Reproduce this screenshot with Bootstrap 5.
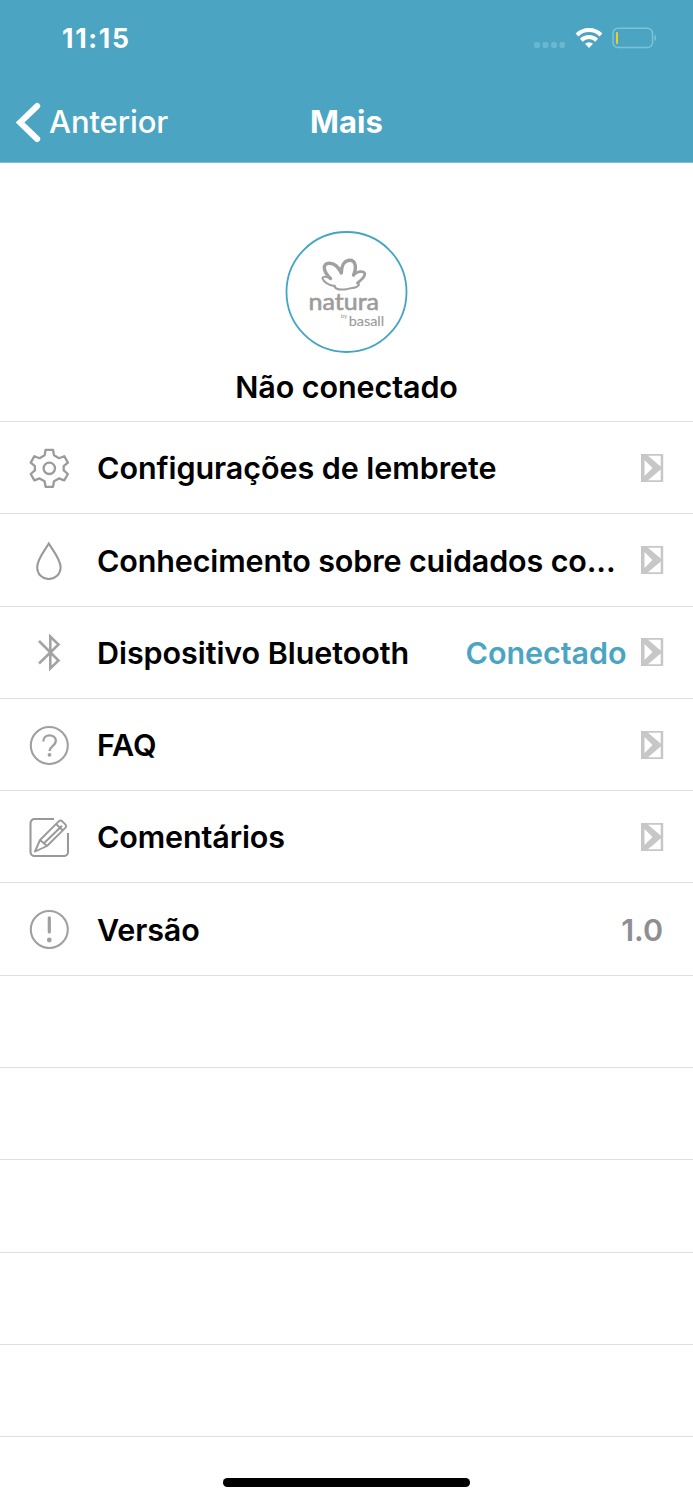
<!DOCTYPE html>
<html lang="pt-BR">
<head>
<meta charset="utf-8">
<meta name="viewport" content="width=device-width, initial-scale=1">
<title>Mais</title>
<link href="https://cdn.jsdelivr.net/npm/bootstrap@5.3.0/dist/css/bootstrap.min.css" rel="stylesheet">
<style>
  body { font-family: Inter, "Liberation Sans", sans-serif; color: #000; background: #fff; }
  .screen { height: 1500px; overflow: hidden; }
  .topbar { background: #4ba5c2; height: 163px; color: #fff; border-bottom: 1px solid #7fc0d4; }
  .status { height: 76px; padding: 0 36px 0 62px; }
  .clock { font-size: 26.500px; font-weight: 700; line-height: 76px; letter-spacing: 1.700px; }
  .navrow { height: 86px; line-height: 92px; font-size: 31px; padding-left: 16px; }
  .navrow .back { font-weight: 500; letter-spacing: -.1px; }
  .navrow .title { font-weight: 700; letter-spacing: .1px; }
  .profile { height: 259px; padding-top: 68px; border-bottom: 1px solid #e0e0e0; }
  .profile .who { font-size: 30.5px; font-weight: 600; line-height: 40px; margin-top: 14px; letter-spacing: -.08px; }
  .menu-row { height: 92.3px; padding: 0 29px; border-bottom: 1px solid #dfdfdf; font-size: 30.5px; font-weight: 600; letter-spacing: -.06px; }
  .menu-row .glyph { width: 40px; height: 40px; margin-right: 28px; }
  .menu-row span { padding-top: 1px; }
  .menu-row .long { letter-spacing: -.14px; }
  .status-link { color: #4ba5c2; margin-right: 14.5px; }
  .version { color: #8e8e93; padding-right: 1px; }
  .home { width: 247px; height: 8.500px; border-radius: 4.250px; background: #000; margin-top: 41px; }
  svg { flex: none; display: block; }
</style>
</head>
<body>
<div class="screen d-flex flex-column">
  <header class="topbar flex-shrink-0">
    <div class="status d-flex justify-content-between align-items-center">
      <span class="clock">11:15</span>
      <svg width="123" height="24" viewBox="0 0 123 24">
        <g fill="#6ab8cf"><rect x="0" y="16" width="6" height="6" rx="2"/><rect x="8.5" y="16" width="6" height="6" rx="2"/><rect x="17" y="16" width="6" height="6" rx="2"/><rect x="25.500" y="16" width="5.500" height="6" rx="2"/></g>
        <g fill="none" stroke="#fff" stroke-width="4"><path d="M43 9a17 17 0 0 1 24 0"/><path d="M47.300 14.200a11 11 0 0 1 15.400 0"/></g>
        <path d="M55 22l-4-4.200a5.800 5.800 0 0 1 8 0z" fill="#fff"/>
        <rect x="79" y="2.300" width="39.500" height="19.200" rx="5" fill="none" stroke="#7cc3d6" stroke-width="1.500"/>
        <path d="M120.500 8.500c2.300 1.500 2.300 5.300 0 6.800z" fill="#7cc3d6"/>
        <rect x="82" y="6" width="2" height="12" rx=".8" fill="#f2cc2f"/>
      </svg>
    </div>
    <nav class="navrow d-flex position-relative">
      <svg class="align-self-center mt-2" width="25" height="42" viewBox="0 0 25 42"><path d="M21.200 4L4 20.500l17.200 16.500" fill="none" stroke="#fff" stroke-width="6" stroke-linecap="round"/></svg>
      <span class="ms-2 back">Anterior</span>
      <span class="title position-absolute start-0 end-0 text-center">Mais</span>
    </nav>
  </header>

  <section class="profile flex-shrink-0 d-flex flex-column align-items-center">
    <svg width="123" height="122" viewBox="285 231 123 122">
      <circle cx="346.500" cy="292" r="60" fill="#fff" stroke="#42a5c4" stroke-width="1.800"/>
      <g fill="none" stroke="#a0a0a0" stroke-linejoin="round" stroke-linecap="round">
        <path stroke-width="3.400" d="M330.500 278.500C322.500 271 322.500 263.500 329 263.200C334.500 263 339 268 341.300 273C341.500 264 345.500 260.200 349.800 260.200C355.500 260.200 357 267.500 353.500 275"/>
        <path stroke-width="2.800" d="M353.500 275C357 271.300 363 270.600 364.500 273C366 276 361.500 279.500 357.500 283"/>
        <path stroke-width="2" d="M330.500 278.500C327 276.300 322.300 276 322.500 278.500C323.500 282 329 285.500 335 286M357.500 283L359 284.500C358.500 288 351 288 347.500 289C342 290 336 290.500 334 286"/>
      </g>
      <g fill="#9c9c9c" font-family="Lato, sans-serif">
        <text x="308.500" y="310" font-size="23" font-weight="400" stroke="#9c9c9c" stroke-width=".6" textLength="70.500" lengthAdjust="spacingAndGlyphs">natura</text>
        <text x="340.700" y="318" font-size="6" textLength="6.500" lengthAdjust="spacingAndGlyphs">by</text>
        <text x="348.700" y="325.500" font-size="12.500" stroke="#9c9c9c" stroke-width=".15" textLength="35.500" lengthAdjust="spacingAndGlyphs">basall</text>
      </g>
    </svg>
    <div class="who">Não conectado</div>
  </section>

  <svg width="0" height="0" class="position-absolute"><defs>
    <g id="chev" fill="#c7c7c7"><path d="M0 0H22.200V28H0zM3.500 6V22L11.500 14zM7 1.700L19.700 12.500V1.700zM7 26.300H19.700V15.500z" fill-rule="evenodd"/></g>
  </defs></svg>

  <main class="flex-shrink-0">
    <div class="menu-row d-flex align-items-center">
      <svg class="glyph" viewBox="0 0 40 40" fill="none" stroke="#9b9b9b" stroke-width="2.300" stroke-linejoin="round"><circle cx="20.300" cy="20.300" r="5.700"/><path d="M16.600 1.800h7.400l1 5.500 5 2.900 5.200-2 3.700 6.400-4.200 3.600v4.200l4.200 3.600-3.700 6.400-5.200-2-5 2.900-1 5.500h-7.400l-1-5.500-5-2.900-5.200 2-3.700-6.400 4.200-3.600v-4.200l-4.200-3.600 3.700-6.400 5.200 2 5-2.900z"/></svg>
      <span class="flex-grow-1">Configurações de lembrete</span>
      <svg width="23" height="28"><use href="#chev"/></svg>
    </div>
    <div class="menu-row d-flex align-items-center">
      <svg class="glyph" viewBox="0 0 40 40" fill="none" stroke="#999" stroke-width="2.100"><path d="M19.800 3.500C16 10 8.200 19 8.200 27.300C8.200 34.300 13.500 39 19.800 39S31.600 34.300 31.600 27.300C31.600 19 23.500 10 19.800 3.500z"/></svg>
      <span class="flex-grow-1 long">Conhecimento sobre cuidados co...</span>
      <svg width="23" height="28"><use href="#chev"/></svg>
    </div>
    <div class="menu-row d-flex align-items-center">
      <svg class="glyph" viewBox="0 0 40 40" fill="none" stroke="#a3a3a3" stroke-width="2.600"><path d="M10 9L29.500 28.500L21.300 36.500V4.500l8.200 8L10 31.500"/></svg>
      <span class="flex-grow-1">Dispositivo Bluetooth</span>
      <span class="status-link">Conectado</span>
      <svg width="23" height="28"><use href="#chev"/></svg>
    </div>
    <div class="menu-row d-flex align-items-center">
      <svg class="glyph" viewBox="0 0 40 40" fill="none" stroke="#a0a0a0" stroke-width="2.100"><circle cx="20.300" cy="20.500" r="18.500"/><path stroke-width="2.300" d="M14.300 16.500c0-8 12.500-8 12.500-.8 0 5.300-6.300 5.300-6.300 10.300"/><circle cx="20.500" cy="29.800" r="1.900" fill="#a0a0a0" stroke="none"/></svg>
      <span class="flex-grow-1">FAQ</span>
      <svg width="23" height="28"><use href="#chev"/></svg>
    </div>
    <div class="menu-row d-flex align-items-center">
      <svg class="glyph" viewBox="0 0 40 40" fill="none" stroke="#999" stroke-width="2.100" stroke-linejoin="round"><path d="M25 2H5.500a4 4 0 0 0-4 4v29a4 4 0 0 0 4 4h29.500a4 4 0 0 0 4-4V16"/><path stroke-width="1.900" d="M6 34.500L11 23 29.700 4.400q1.800-1.700 3.600 0l3 3q1.700 1.700 0 3.400L18 29zM11 23l7 6M14.700 26.500L33 8.700M27 7l7 6.500"/></svg>
      <span class="flex-grow-1 long">Comentários</span>
      <svg width="23" height="28"><use href="#chev"/></svg>
    </div>
    <div class="menu-row d-flex align-items-center">
      <svg class="glyph" viewBox="0 0 40 40" fill="none" stroke="#a0a0a0" stroke-width="2.100"><circle cx="20.300" cy="20.500" r="18.500"/><path stroke-width="3.200" stroke-linecap="round" d="M20.300 8.800V23"/><circle cx="20.300" cy="31" r="2.400" fill="#a0a0a0" stroke="none"/></svg>
      <span class="flex-grow-1 long">Versão</span>
      <span class="version">1.0</span>
    </div>
    <div class="menu-row"></div>
    <div class="menu-row"></div>
    <div class="menu-row"></div>
    <div class="menu-row"></div>
    <div class="menu-row"></div>
  </main>
  <div class="home mx-auto flex-shrink-0"></div>
</div>
<script src="https://cdn.jsdelivr.net/npm/bootstrap@5.3.0/dist/js/bootstrap.bundle.min.js"></script>
</body>
</html>
